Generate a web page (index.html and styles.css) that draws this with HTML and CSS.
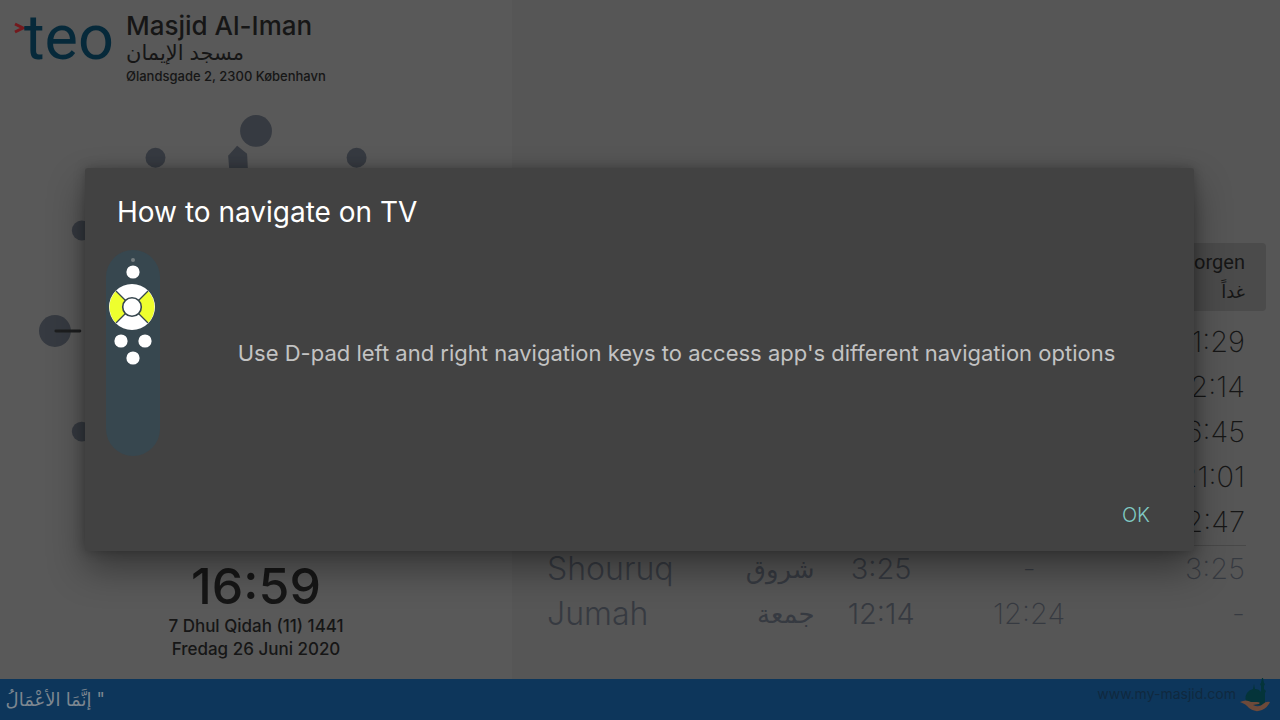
FILE: index.html
```html
<!DOCTYPE html>
<html lang="da">
<head>
<meta charset="utf-8">
<title>Masjid Al-Iman</title>
<link rel="stylesheet" href="styles.css">
</head>
<body>
<div class="screen">
  <main class="board">
    <section class="mosque">
      <header class="brand">
        <svg class="logo" width="100" height="52" viewBox="0 0 100 52" role="img" aria-label="teo">
          <path d="M1 12 L9 16 L1 20" fill="none" stroke="#74191d" stroke-width="3"/>
          <text class="logo-text" x="10" y="47">teo</text>
        </svg>
        <div class="brand-text">
          <h1 class="name">Masjid Al-Iman</h1>
          <p class="name-ar" lang="ar" dir="rtl">مسجد الإيمان</p>
          <p class="address">Ølandsgade 2, 2300 København</p>
        </div>
      </header>
      <svg class="clock" viewBox="0 0 432 432" aria-hidden="true">
        <g fill="#363a41">
          <circle cx="216" cy="16" r="16"/><circle cx="317" cy="43" r="10"/>
          <circle cx="390" cy="116" r="10"/><circle cx="417" cy="217" r="16"/>
          <circle cx="390" cy="318" r="10"/><circle cx="316" cy="391" r="10"/>
          <circle cx="216" cy="418" r="16"/><circle cx="116" cy="391" r="10"/>
          <circle cx="41" cy="318" r="10"/><circle cx="14" cy="217" r="16"/>
          <circle cx="41" cy="116" r="10"/><circle cx="115" cy="43" r="10"/>
          <path d="M197 31 L207 39 L216 216 L202 216 L188 41 Z"/>
        </g>
        <path d="M15 217 H39" stroke="#1d1e1f" stroke-width="3" stroke-linecap="round"/>
      </svg>
      <div class="now">
        <time class="time">16:59</time>
        <p class="date">7 Dhul Qidah (11) 1441</p>
        <p class="date">Fredag 26 Juni 2020</p>
      </div>
    </section>
    <section class="prayers">
      <table class="times">
        <colgroup><col class="c-name"><col class="c-ar"><col class="c-time"><col class="c-iqamah"><col class="c-next"></colgroup>
        <thead>
          <tr><th></th><th></th><th></th><th></th><th class="next">Morgen<span class="next-ar" lang="ar" dir="rtl">غداً</span></th></tr>
        </thead>
        <tbody class="main-rows">
          <tr><td></td><td></td><td></td><td></td><td class="next">1:29</td></tr>
          <tr><td></td><td></td><td></td><td></td><td class="next">12:14</td></tr>
          <tr><td></td><td></td><td></td><td></td><td class="next">16:45</td></tr>
          <tr><td></td><td></td><td></td><td></td><td class="next">21:01</td></tr>
          <tr><td></td><td></td><td></td><td></td><td class="next">22:47</td></tr>
        </tbody>
        <tbody class="extra-rows">
          <tr><td class="label">Shouruq</td><td class="label-ar" lang="ar" dir="rtl">شروق</td><td class="adhan">3:25</td><td class="iqamah">-</td><td class="next">3:25</td></tr>
          <tr><td class="label">Jumah</td><td class="label-ar" lang="ar" dir="rtl">جمعة</td><td class="adhan">12:14</td><td class="iqamah">12:24</td><td class="next">-</td></tr>
        </tbody>
      </table>
    </section>
  </main>
  <footer class="ticker">
    <p class="quote" lang="ar" dir="rtl">" إنَّمَا الأعْمَالُ بِالنِّيَّاتِ</p>
    <a class="site" href="#">www.my-masjid.com</a>
    <svg class="site-logo" width="32" height="36" viewBox="0 0 32 36" aria-hidden="true">
      <path d="M21 6 L22 1 H23 L24 6 L25 7 L24 9 V12 L26 14 L25 16 V28 H9 Q3 22 7 16 Q9 13 13 12 L14 7 L15 12 Q19 12 21 15 V9 L20 7 Z" fill="#04343a"/>
      <path d="M0 25 Q6 22 11 25 H17 Q21 25 19 27 L13 28 Q19 31 23 27 Q26 24 30 25 Q28 30 22 33 Q15 36 9 31 Q6 27 0 25Z" fill="#6d4a3a"/>
    </svg>
  </footer>
  <div class="overlay">
    <div class="dialog" role="dialog" aria-modal="true" aria-labelledby="dialog-title">
      <h2 class="title" id="dialog-title">How to navigate on TV</h2>
      <div class="content">
        <svg class="remote" width="54" height="206" viewBox="0 0 54 206" aria-hidden="true">
          <rect width="54" height="206" rx="27" fill="#37474f"/>
          <circle cx="27" cy="10" r="2" fill="#757d80"/>
          <g fill="#fff">
            <circle cx="27" cy="22" r="6.6"/>
            <circle cx="26" cy="57" r="23"/>
            <circle cx="15" cy="91" r="6.6"/><circle cx="39" cy="91" r="6.6"/>
            <circle cx="27" cy="108" r="6.6"/>
          </g>
          <path d="M26 57 L10 41 A23 23 0 0 0 10 73 Z M26 57 L42 41 A23 23 0 0 1 42 73 Z" fill="#eeff2e"/>
          <path d="M10 41 L42 73 M42 41 L10 73" stroke="#37474f" stroke-width="1.3"/>
          <circle cx="26" cy="57" r="9.3" fill="#fff" stroke="#37474f" stroke-width="1.6"/>
        </svg>
        <p class="message">Use D-pad left and right navigation keys to access app's different navigation options</p>
      </div>
      <div class="actions"><button class="ok" type="button">OK</button></div>
    </div>
  </div>
</div>
</body>
</html>
```
FILE: styles.css
```css
* { box-sizing: border-box; }
body, h1, h2, p { margin: 0; }
body {
  font-family: Inter, "DejaVu Sans", sans-serif;
  color: #161616;
  background: #595959;
}
.screen { position: relative; display: flex; flex-direction: column; min-height: 100vh; overflow: hidden; }
.board { flex: 1; display: grid; grid-template-columns: 2fr 3fr; }
.mosque { display: flex; flex-direction: column; align-items: center; background: #595959; }
.brand { align-self: stretch; display: flex; gap: 12px; padding: 12px 14px 0; height: 115px; }
.logo { overflow: visible; }
.logo-text { font-family: Roboto, sans-serif; font-size: 63px; font-weight: 400; fill: #06293a; }
.name { font-size: 26px; font-weight: 500; line-height: 28px; }
.name-ar { font-size: 21px; line-height: 26px; text-align: left; }
.address { font-size: 13px; font-weight: 500; line-height: 20px; }
.clock { width: 84%; overflow: visible; }
.now { display: flex; flex-direction: column; align-items: center; padding-top: 12px; }
.time { font-size: 50px; font-weight: 500; line-height: 58px; }
.date { font-size: 17px; font-weight: 500; line-height: 23px; }

.prayers { display: flex; flex-direction: column; justify-content: flex-end; padding: 0 14px 43px; background: #565656; }
.times { width: 100%; table-layout: fixed; border-spacing: 0; font-size: 29px; font-weight: 200; }
.c-name { width: 23%; }
.c-ar { width: 16%; }
.c-time { width: 18%; }
.c-iqamah { width: 22%; }
.c-next { width: 21%; }
th, td { padding: 0; height: 45px; line-height: 45px; white-space: nowrap; }
thead th { height: 68px; background: #4b4b4b; line-height: 30px; }
thead th:first-child { border-radius: 4px 0 0 4px; }
thead th:last-child { border-radius: 0 4px 4px 0; }
thead .next { font-family: Roboto, "DejaVu Sans", sans-serif; font-size: 20px; font-weight: 400; }
.next-ar { display: block; direction: ltr; text-align: right; font-size: 18px; }
.next { text-align: right; padding-right: 21px; }
.main-rows::before { content: ""; display: table-row; height: 8px; }
.main-rows::after { content: ""; display: table-row; height: 1px; }
.extra-rows { color: #363a41; }
.extra-rows tr:first-child td {
  border-top: 1px solid;
  border-image: linear-gradient(#484848, #484848) 1;
}
.extra-rows tr:first-child .next { border-image: linear-gradient(to left, transparent 21px, #484848 21px) 1; }
.label { padding-left: 21px; }
.label-ar { text-align: right; direction: ltr; font-size: 26px; font-weight: 400; }
.label { font-size: 32px; font-weight: 300; }
.adhan { font-weight: 300; }
.adhan, .iqamah { text-align: center; }

.ticker { display: flex; align-items: center; height: 41px; padding: 0 8px 0 5px; background: #0d365b; }
.quote { width: 100px; margin-right: auto; overflow: hidden; color: #7d8790; font-size: 18px; line-height: 36px; white-space: nowrap; }
.site { color: #10293f; font-size: 14px; line-height: 20px; padding-bottom: 12px; text-decoration: none; }
.site-logo { margin-left: 4px; margin-bottom: 10px; overflow: visible; }

.overlay { position: absolute; inset: 0; display: flex; align-items: center; justify-content: center; padding: 0 86px 2px 85px; }
.dialog {
  width: 100%; padding: 22px 21px 14px; border-radius: 3px; background: #424242;
  box-shadow: 0 18px 36px rgba(0, 0, 0, .38), 0 0 12px rgba(0, 0, 0, .25);
}
.title { padding-left: 11px; color: #fff; font-size: 28px; font-weight: 400; line-height: 44px; }
.content { display: flex; align-items: center; padding-top: 16px; }
.message { flex: 1; padding-left: 20px; text-align: center; color: #c3c3c3; font-size: 22px; font-weight: 400; line-height: 28px; }
.actions { display: flex; justify-content: flex-end; padding: 37px 10px 0 0; }
.ok { border: 0; padding: 0 13px; background: none; color: #80cbc4; font: inherit; font-size: 20px; font-weight: 300; line-height: 44px; }
```
